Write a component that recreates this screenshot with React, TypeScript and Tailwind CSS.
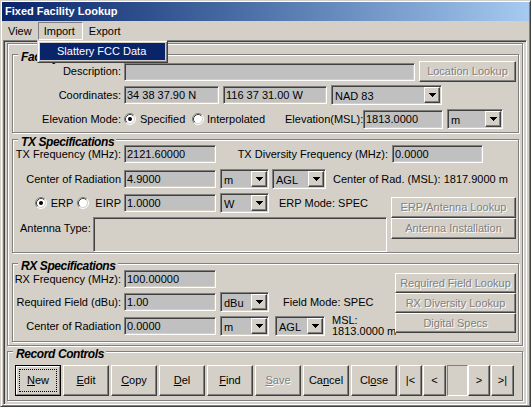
import type { ReactNode } from "react";

const sunken =
  "border border-t-[#808080] border-l-[#808080] border-b-white border-r-white shadow-[inset_1px_1px_0_#404040,inset_-1px_-1px_0_#d4d0c8]";
const raised =
  "border border-t-white border-l-white border-b-[#404040] border-r-[#404040] shadow-[inset_-1px_-1px_0_#808080]";
const etched = "border border-[#808080] shadow-[inset_1px_1px_0_#fff,1px_1px_0_#fff]";
const grayed = "text-[#808080] [text-shadow:1px_1px_0_#fff]";

function Arrow() {
  return (
    <svg width="7" height="4" viewBox="0 0 7 4" shapeRendering="crispEdges">
      <rect x="0" y="0" width="7" height="1" />
      <rect x="1" y="1" width="5" height="1" />
      <rect x="2" y="2" width="3" height="1" />
      <rect x="3" y="3" width="1" height="1" />
    </svg>
  );
}

function Radio({ checked = false, className = "" }: { checked?: boolean; className?: string }) {
  return (
    <svg width="12" height="12" viewBox="0 0 12 12" className={`shrink-0 ${className}`}>
      <circle cx="6" cy="6" r="5" fill="#fff" />
      <path d="M2.11 9.89A5.5 5.5 0 0 1 9.89 2.11" fill="none" stroke="#808080" />
      <path d="M9.89 2.11A5.5 5.5 0 0 1 2.11 9.89" fill="none" stroke="#fff" />
      <path d="M2.82 9.18A4.5 4.5 0 0 1 9.18 2.82" fill="none" stroke="#404040" />
      <path d="M9.18 2.82A4.5 4.5 0 0 1 2.82 9.18" fill="none" stroke="#d4d0c8" />
      {checked && <circle cx="6" cy="6" r="2" fill="#000" />}
    </svg>
  );
}

function Label({ children }: { children: ReactNode }) {
  return <span className="w-[111px] shrink-0 whitespace-nowrap pr-[3px] text-right">{children}</span>;
}

function Field({ value = "", className = "" }: { value?: string; className?: string }) {
  return (
    <div className={`${sunken} flex shrink-0 items-center whitespace-nowrap bg-[#c0c0c0] pl-[2px] ${className}`}>
      {value}
    </div>
  );
}

function Combo({ value, className = "" }: { value: string; className?: string }) {
  return (
    <div className={`${sunken} flex shrink-0 bg-[#c0c0c0] p-[1px] ${className}`}>
      <span className="flex flex-1 items-center pl-[2px] pt-[2px]">{value}</span>
      <span className={`${raised} flex w-[16px] items-center justify-center bg-[#d4d0c8]`}>
        <Arrow />
      </span>
    </div>
  );
}

function Btn({ children, disabled, className = "" }: { children: ReactNode; disabled?: boolean; className?: string }) {
  return (
    <div
      className={`${raised} flex shrink-0 items-center justify-center whitespace-nowrap bg-[#d4d0c8] ${
        disabled ? grayed : ""
      } ${className}`}
    >
      {children}
    </div>
  );
}

function GroupBox({ title, className = "", children }: { title: string; className?: string; children: ReactNode }) {
  return (
    <div className={`relative shrink-0 ${etched} ${className}`}>
      <span className="absolute left-[5px] top-[-5px] whitespace-nowrap bg-[#d4d0c8] pl-[3px] pr-[2px] text-[12px] font-bold italic leading-[14px] tracking-[-0.4px]">
        {title}
      </span>
      {children}
    </div>
  );
}

export default function App() {
  return (
    <div className="relative flex h-[407px] w-[531px] flex-col border border-t-[#d4d0c8] border-l-[#d4d0c8] border-b-[#404040] border-r-[#404040] bg-[#d4d0c8] p-[1px] font-[family-name:'Liberation_Sans',Arial,sans-serif] text-[11px] leading-none text-black shadow-[inset_1px_1px_0_#fff,inset_-1px_-1px_0_#808080]">
      <div className="flex h-[19px] shrink-0 items-center bg-linear-to-r from-[#0a246a] to-[#a6caf0] pl-[3px] font-bold text-white">
        Fixed Facility Lookup
      </div>

      <div className="flex h-[19px] shrink-0 items-start pt-[1px]">
        <span className="flex h-[18px] items-center px-[6px]">View</span>
        <span className="flex h-[18px] items-center border border-t-[#808080] border-l-[#808080] border-b-white border-r-white pl-[5px] pr-[7px]">
          Import
        </span>
        <span className="flex h-[18px] items-center px-[6px]">Export</span>
      </div>

      <div className={`${sunken} ml-[1px] mr-[2px] flex flex-1 flex-col pl-[3px] pt-[2px]`}>
        <div className={`${etched} flex h-[303px] w-[516px] shrink-0 flex-col pl-[4px] pt-[10px]`}>
          <GroupBox title="Facility" className="h-[79px] w-[507px] pt-[6px]">
            <div className="flex h-[21px] items-center">
              <Label>Description:</Label>
              <Field className="h-[18px] w-[291px]" />
              <Btn disabled className="ml-[4px] h-[21px] w-[97px]">
                Location Lookup
              </Btn>
            </div>
            <div className="mt-[3px] flex h-[20px] items-center">
              <Label>Coordinates:</Label>
              <Field value="34 38 37.90 N" className="h-[18px] w-[95px]" />
              <Field value="116 37 31.00 W" className="ml-[4px] h-[18px] w-[104px]" />
              <Combo value="NAD 83" className="ml-[4px] h-[20px] w-[111px]" />
            </div>
            <div className="mt-[4px] flex h-[20px] items-center">
              <Label>Elevation Mode:</Label>
              <Radio checked />
              <span className="ml-[4px] w-[52px]">Specified</span>
              <Radio />
              <span className="ml-[3px] w-[78px]">Interpolated</span>
              <span className="w-[78px] shrink-0 whitespace-nowrap pr-[3px] text-right">Elevation(MSL):</span>
              <Field value="1813.0000" className="h-[19px] w-[80px]" />
              <Combo value="m" className="ml-[4px] h-[20px] w-[56px]" />
            </div>
          </GroupBox>

          <GroupBox title="TX Specifications" className="mt-[6px] h-[114px] w-[507px] pt-[4px]">
            <div className="flex h-[20px] items-center">
              <Label>TX Frequency (MHz):</Label>
              <Field value="2121.60000" className="h-[18px] w-[92px]" />
              <span className="w-[176px] shrink-0 whitespace-nowrap pr-[4px] text-right">
                TX Diversity Frequency (MHz):
              </span>
              <Field value="0.0000" className="h-[18px] w-[91px]" />
            </div>
            <div className="mt-[5px] flex h-[20px] items-center">
              <Label>Center of Radiation</Label>
              <Field value="4.9000" className="h-[18px] w-[92px]" />
              <Combo value="m" className="ml-[4px] h-[20px] w-[49px]" />
              <Combo value="AGL" className="ml-[3px] h-[20px] w-[54px]" />
              <span className="ml-[7px] whitespace-nowrap">Center of Rad. (MSL): 1817.9000 m</span>
            </div>
            <div className="mt-[4px] flex">
              <div className="flex w-[374px] flex-col">
                <div className="flex h-[20px] items-center">
                  <span className="flex w-[111px] shrink-0 items-center justify-end pr-[3px]">
                    <Radio checked />
                    <span className="ml-[4px]">ERP</span>
                    <Radio className="ml-[4px]" />
                    <span className="ml-[6px]">EIRP</span>
                  </span>
                  <Field value="1.0000" className="h-[18px] w-[92px]" />
                  <Combo value="W" className="ml-[4px] h-[20px] w-[49px]" />
                  <span className="ml-[10px] whitespace-nowrap">ERP Mode: SPEC</span>
                </div>
                <div className="mt-[4px] flex h-[35px]">
                  <span className="w-[80px] shrink-0 pl-[7px] pt-[6px]">Antenna Type:</span>
                  <div className={`${sunken} h-[35px] w-[294px] bg-[#d4d0c8]`} />
                </div>
              </div>
              <div className="ml-[4px] mt-[4px] flex w-[125px] flex-col">
                <Btn disabled className="h-[21px]">
                  ERP/Antenna Lookup
                </Btn>
                <Btn disabled className="h-[21px]">
                  Antenna Installation
                </Btn>
              </div>
            </div>
          </GroupBox>

          <GroupBox title="RX Specifications" className="mt-[10px] flex h-[79px] w-[507px]">
            <div className="flex w-[378px] flex-col pt-[5px]">
              <div className="flex h-[20px] items-center">
                <Label>RX Frequency (MHz):</Label>
                <Field value="100.00000" className="h-[18px] w-[92px]" />
              </div>
              <div className="mt-[3px] flex h-[20px] items-center">
                <Label>Required Field (dBu):</Label>
                <Field value="1.00" className="h-[18px] w-[92px]" />
                <Combo value="dBu" className="ml-[4px] h-[20px] w-[49px]" />
                <span className="ml-[14px] whitespace-nowrap">Field Mode: SPEC</span>
              </div>
              <div className="mt-[4px] flex h-[20px] items-center">
                <Label>Center of Radiation</Label>
                <Field value="0.0000" className="h-[18px] w-[92px]" />
                <Combo value="m" className="ml-[4px] h-[20px] w-[49px]" />
                <Combo value="AGL" className="ml-[6px] h-[20px] w-[50px]" />
                <span className="ml-[7px] -mt-[1px] flex flex-col whitespace-nowrap leading-[11px]">
                  <span>MSL:</span>
                  <span>1813.0000 m</span>
                </span>
              </div>
            </div>
            <div className="ml-[4px] flex w-[121px] flex-col pt-[9px]">
              <Btn disabled className="h-[20px]">
                Required Field Lookup
              </Btn>
              <Btn disabled className="h-[20px]">
                RX Diversity Lookup
              </Btn>
              <Btn disabled className="h-[20px]">
                Digital Specs
              </Btn>
            </div>
          </GroupBox>
        </div>

        <GroupBox title="Record Controls" className="mt-[5px] flex h-[50px] w-[516px] pl-[7px] pt-[13px]">
          <div className="flex h-[31px] w-[46px] shrink-0 border border-black">
            <div className="flex flex-1 border border-t-white border-l-white border-b-[#808080] border-r-[#808080] p-[2px]">
              <div className="flex flex-1 items-center justify-center border border-dotted border-black">
                <u>N</u>ew
              </div>
            </div>
          </div>
          <Btn className="ml-[2px] h-[31px] w-[46px]">
            <u>E</u>dit
          </Btn>
          <Btn className="ml-[2px] h-[31px] w-[46px]">
            <u>C</u>opy
          </Btn>
          <Btn className="ml-[2px] h-[31px] w-[46px]">
            <u>D</u>el
          </Btn>
          <Btn className="ml-[2px] h-[31px] w-[46px]">
            <u>F</u>ind
          </Btn>
          <Btn disabled className="ml-[2px] h-[31px] w-[46px]">
            <u>S</u>ave
          </Btn>
          <Btn className="ml-[2px] h-[31px] w-[46px]">
            Ca<u>n</u>cel
          </Btn>
          <Btn className="ml-[2px] h-[31px] w-[46px]">
            Cl<u>o</u>se
          </Btn>
          <Btn className="ml-[2px] h-[31px] w-[23px]">|&lt;</Btn>
          <Btn className="ml-[1px] h-[31px] w-[23px]">&lt;</Btn>
          <div className="ml-[1px] h-[31px] w-[21px] shrink-0 border border-t-[#808080] border-l-[#808080] border-b-white border-r-white" />
          <Btn className="h-[31px] w-[22px]">&gt;</Btn>
          <Btn className="ml-[1px] h-[31px] w-[23px]">&gt;|</Btn>
        </GroupBox>
      </div>

      <div className="absolute left-[36px] top-[39px] h-[23px] w-[131px] border border-t-[#d4d0c8] border-l-[#d4d0c8] border-b-[#404040] border-r-[#404040] bg-[#d4d0c8] p-[2px] shadow-[inset_1px_1px_0_#fff,inset_-1px_-1px_0_#808080]">
        <div className="flex h-[17px] items-center whitespace-nowrap bg-[#0a246a] pl-[17px] text-white">
          Slattery FCC Data
        </div>
      </div>
    </div>
  );
}
